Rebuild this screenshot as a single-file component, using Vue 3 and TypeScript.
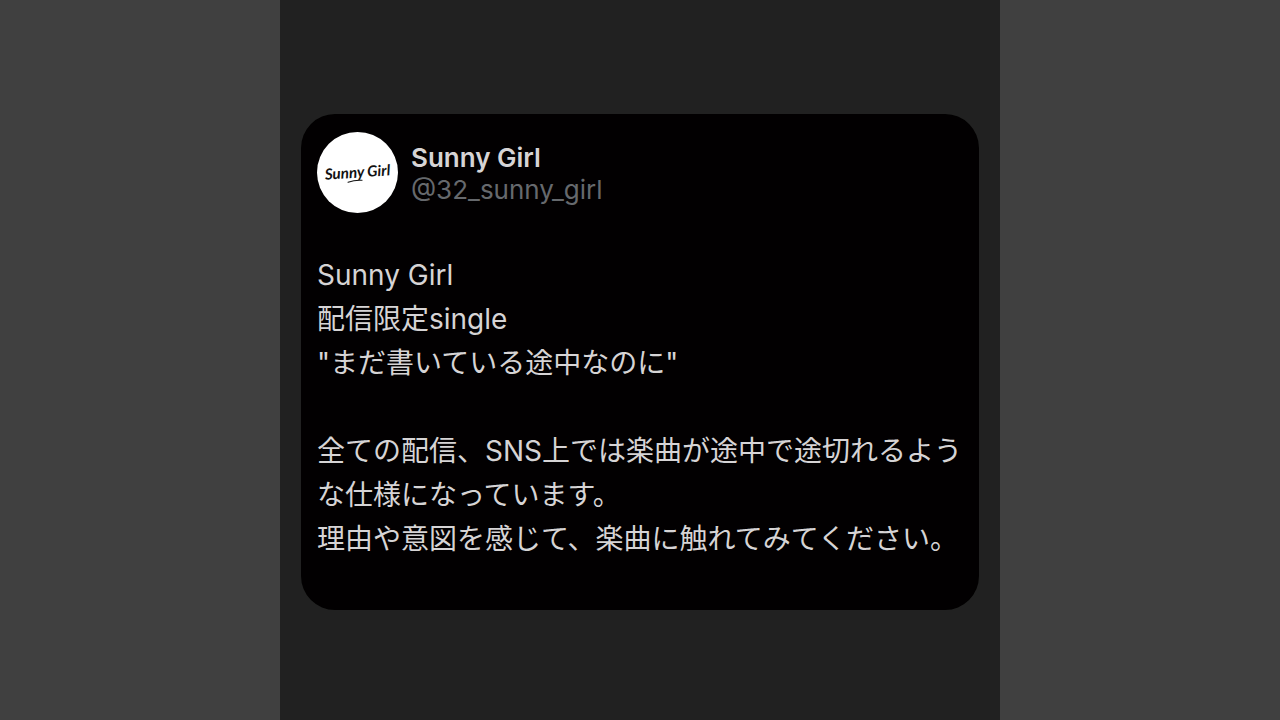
<script setup lang="ts">
interface Post {
  name: string
  handle: string
  paragraphs: string[][]
}

const post: Post = {
  name: 'Sunny Girl',
  handle: '@32_sunny_girl',
  paragraphs: [
    ['Sunny Girl', '配信限定single', '"まだ書いている途中なのに"'],
    [
      '全ての配信、SNS上では楽曲が途中で途切れるような仕様になっています。',
      '理由や意図を感じて、楽曲に触れてみてください。',
    ],
  ],
}
</script>

<template>
  <main class="stage">
    <div class="frame">
      <article class="card" lang="ja">
        <header class="author">
          <svg class="avatar" viewBox="0 0 80 80" role="img" aria-label="Sunny Girl">
            <circle cx="40" cy="40" r="40" fill="#fff" />
            <g transform="rotate(-4 40 40)">
              <text class="wordmark" x="40" y="45" text-anchor="middle">Sunny Girl</text>
              <path d="M30 49 Q37 47 44 48" fill="none" stroke="#111" stroke-linecap="round" />
            </g>
          </svg>
          <div class="identity">
            <h1 class="name">{{ post.name }}</h1>
            <p class="handle">{{ post.handle }}</p>
          </div>
        </header>
        <div class="body">
          <div v-for="(lines, i) in post.paragraphs" :key="i">
            <p v-for="line in lines" :key="line" class="line">{{ line }}</p>
          </div>
        </div>
      </article>
    </div>
  </main>
</template>

<style>
body {
  margin: 0;
  background: #404040;
}
</style>

<style scoped>
.stage {
  display: flex;
  justify-content: center;
  min-height: 100vh;
  background: #404040;
  font-family: Inter, "Noto Sans CJK JP", sans-serif;
}
.frame {
  display: flex;
  flex-direction: column;
  justify-content: center;
  box-sizing: border-box;
  width: 100%;
  max-width: 720px;
  padding: 4px 21px 0;
  background: #212121;
}
.card {
  padding: 18px 14px 49px 16px;
  border-radius: 34px;
  background: #020001;
  color: #d6d4d5;
}
.author {
  display: flex;
  align-items: center;
  gap: 13px;
}
.avatar {
  flex: none;
  width: 81px;
  height: 81px;
}
.identity {
  padding-top: 3px;
}
.wordmark {
  font-family: Lato, sans-serif;
  font-size: 15px;
  font-style: italic;
  font-weight: 700;
  fill: #111;
}
.name,
.handle,
.line {
  margin: 0;
}
.name {
  font-size: 26px;
  line-height: 32px;
  font-weight: 600;
}
.handle {
  font-size: 26px;
  line-height: 32px;
  color: #66696d;
}
.body {
  display: grid;
  gap: 44px;
  margin-top: 40px;
  font-size: 28px;
  line-height: 44px;
}
</style>
